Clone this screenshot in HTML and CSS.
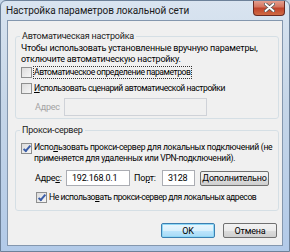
FILE: index.html
```html
<!DOCTYPE html>
<html lang="ru">
<head>
    <meta charset="UTF-8">
    <title>Настройка параметров локальной сети</title>
    <link rel="stylesheet" href="styles.css">
</head>
<body>

    <div class="window">
        <div class="titlebar">
            <span class="title">Настройка параметров локальной сети</span>
            <button class="close-btn">
                <svg width="11" height="9" viewBox="0 0 11 9">
                    <path d="M1.5 1 L9.5 8 M9.5 1 L1.5 8" stroke="#555" stroke-width="3.4" stroke-linecap="round"/>
                    <path d="M1.5 1 L9.5 8 M9.5 1 L1.5 8" stroke="#fff" stroke-width="1.8" stroke-linecap="round"/>
                </svg>
            </button>
        </div>

        <div class="client">
            <!-- Automatic configuration -->
            <fieldset class="group group-auto">
                <legend>Автоматическая настройка</legend>
                <p class="hint">Чтобы использовать установленные вручную параметры,<br>отключите автоматическую настройку.</p>
                <label class="check first">
                    <span class="box"></span>
                    <span class="focus">Автоматическое определение параметров</span>
                </label>
                <label class="check">
                    <span class="box"></span>
                    <span><u>И</u>спользовать сценарий автоматической настройки</span>
                </label>
                <div class="addr-row disabled">
                    <span class="addr-label">Адрес</span>
                    <span class="field field-script"></span>
                </div>
            </fieldset>

            <!-- Proxy server -->
            <fieldset class="group group-proxy">
                <legend>Прокси-сервер</legend>
                <label class="check multi">
                    <span class="box checked"></span>
                    <span>Испо<u>л</u>ьзовать прокси-сервер для локальных подключений (не<br>применяется для удаленных или VPN-подключений).</span>
                </label>
                <div class="proxy-row">
                    <span class="addr-label">Адре<u>с</u>:</span>
                    <span class="field field-addr">192.168.0.1</span>
                    <span class="port-label">По<u>р</u>т:</span>
                    <span class="field field-port">3128</span>
                    <button class="btn btn-more"><u>Д</u>ополнительно</button>
                </div>
                <label class="check indent">
                    <span class="box checked"></span>
                    <span>Не использо<u>в</u>ать прокси-сервер для локальных адресов</span>
                </label>
            </fieldset>

            <div class="actions">
                <button class="btn btn-default">OK</button>
                <button class="btn">Отмена</button>
            </div>
        </div>
    </div>

</body>
</html>
```

FILE: styles.css
```css
body {
    margin: 0;
    font-family: Roboto, "Liberation Sans", Arial, sans-serif;
    font-size: 9px;
    letter-spacing: -0.2px;
    color: #000;
    background: #c6d6e8;
}
.window {
    width: 290px;
    height: 252px;
    box-sizing: border-box;
    border: 1px solid #6d8199;
    border-radius: 6px 6px 0 0;
    background: linear-gradient(180deg, #d9e4f0 0%, #c6d6e8 40%, #b2cae8 100%);
    display: flex;
    flex-direction: column;
    overflow: hidden;
}

/* Title bar */
.titlebar {
    height: 19px;
    flex: none;
    display: flex;
    align-items: flex-start;
    justify-content: space-between;
    padding-left: 5px;
}
.title {
    font-size: 10px;
    letter-spacing: -0.1px;
    line-height: 20px;
    color: #1a1a1a;
    white-space: nowrap;
}
.close-btn {
    width: 32px;
    height: 16px;
    margin-right: 4px;
    margin-top: -1px;
    padding: 0;
    border: 1px solid #6a2a22;
    border-top: none;
    border-radius: 0 0 4px 4px;
    background: linear-gradient(180deg, #e6a597 0%, #d57660 45%, #c0432b 55%, #cf6b45 100%);
    display: flex;
    align-items: center;
    justify-content: center;
}

/* Client area */
.client {
    flex: 1;
    margin: 0 6px 5px;
    border: 1px solid #8497ae;
    background: #f0f0f0;
    display: flex;
    flex-direction: column;
    white-space: nowrap;
}
.group {
    margin: 0 0 0 7px;
    width: 264px;
    box-sizing: border-box;
    border: 1px solid #d5dfe5;
    border-radius: 3px;
    padding: 0 5px 2px;
    min-width: 0;
}
.group legend {
    padding: 0 2px;
    margin-left: -1px;
    line-height: 11px;
    color: #1c1c1c;
}
.group-auto {
    margin-top: 10px;
}
.group-proxy {
    margin-top: 6px;
    padding-bottom: 7px;
}
.hint {
    margin: 1px 0 0;
    line-height: 11px;
}

/* Checkboxes */
.check {
    display: flex;
    align-items: center;
    height: 12px;
    margin-top: 4px;
    line-height: 11px;
    font-size: 8.6px;
    letter-spacing: -0.45px;
}
.check.first {
    margin-top: 1px;
}
.check.multi {
    height: auto;
    align-items: flex-start;
    margin-top: 6px;
    letter-spacing: -0.3px;
}
.check.indent {
    margin-left: 15px;
    margin-top: 5px;
}
.box {
    width: 9px;
    height: 9px;
    flex: none;
    margin-right: 2px;
    border: 1px solid #8e8f8f;
    background: linear-gradient(135deg, #dcdcdc, #f6f6f6);
    position: relative;
}
.check.multi .box {
    margin-top: 1px;
}
.box.checked::after {
    content: "";
    position: absolute;
    left: 3px;
    top: 0;
    width: 2px;
    height: 6px;
    border: solid #3b5ea8;
    border-width: 0 2px 2px 0;
    transform: rotate(40deg);
}
.focus {
    outline: 1px dotted #333;
    outline-offset: 0;
}

/* Address rows */
.addr-row {
    display: flex;
    align-items: center;
    margin-top: 4px;
    height: 18px;
}
.disabled .addr-label {
    color: #a3a3a3;
}
.addr-label {
    width: 29px;
    margin-left: 14px;
}
.field {
    box-sizing: border-box;
    height: 100%;
    border: 1px solid #abadb3;
    background: #fff;
    padding-left: 5px;
    display: flex;
    align-items: center;
}
.field-script {
    width: 143px;
    border-color: #cfd2d8;
    background: #f0f0f0;
}
.proxy-row {
    display: flex;
    align-items: center;
    margin-top: 6px;
    height: 16px;
}
.proxy-row .addr-label {
    width: 31px;
}
.field-addr {
    width: 64px;
}
.port-label {
    margin-left: 4px;
    width: 28px;
}
.field-port {
    width: 33px;
}

/* Buttons */
.btn {
    font-family: inherit;
    font-size: 9px;
    letter-spacing: -0.2px;
    color: #000;
    height: 15px;
    padding: 0;
    border: 1px solid #707070;
    border-radius: 2px;
    background: linear-gradient(180deg, #f2f2f2 0%, #ebebeb 50%, #dddddd 50%, #cfcfcf 100%);
}
.btn-more {
    margin-left: 5px;
    width: 69px;
}
.actions {
    display: flex;
    justify-content: flex-end;
    gap: 8px;
    margin: 12px 5px 0 0;
}
.actions .btn {
    width: 54px;
    height: 15px;
}
.btn-default {
    border-color: #3c7fb1;
    box-shadow: inset 0 0 0 1px #8fd8f6;
    background: linear-gradient(180deg, #eaf6fd 0%, #d9f0fc 50%, #bee6fd 50%, #a7d9f5 100%);
}
```
